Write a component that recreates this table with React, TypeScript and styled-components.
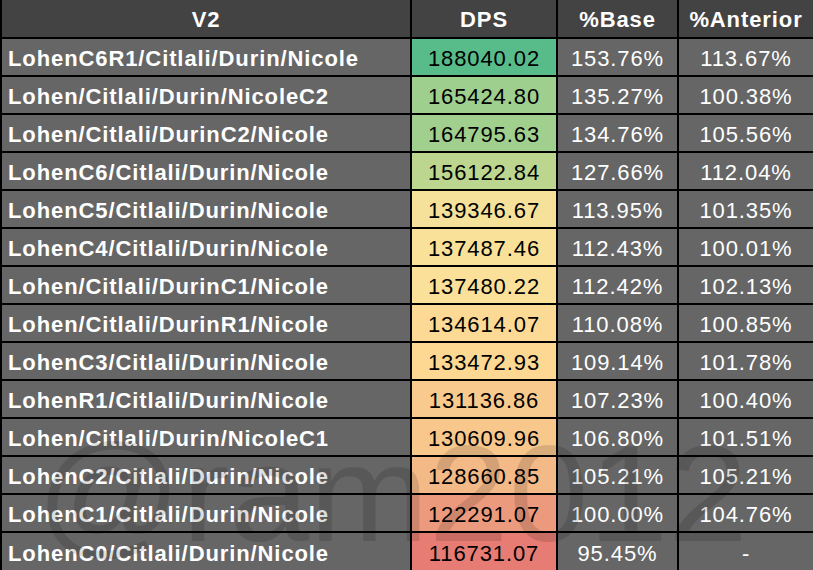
import styled, { createGlobalStyle } from "styled-components";

const GlobalStyle = createGlobalStyle`
  html, body {
    margin: 0;
    padding: 0;
    background: #666666;
  }
  body {
    font-family: "Liberation Sans", Arial, sans-serif;
  }
`;

type Row = {
  team: string;
  dps: string;
  base: string;
  prev: string;
  color: string;
};

const rows: Row[] = [
  { team: "LohenC6R1/Citlali/Durin/Nicole", dps: "188040.02", base: "153.76%", prev: "113.67%", color: "#57bb8a" },
  { team: "Lohen/Citlali/Durin/NicoleC2", dps: "165424.80", base: "135.27%", prev: "100.38%", color: "#9fcf8e" },
  { team: "Lohen/Citlali/DurinC2/Nicole", dps: "164795.63", base: "134.76%", prev: "105.56%", color: "#a0cf8e" },
  { team: "LohenC6/Citlali/Durin/Nicole", dps: "156122.84", base: "127.66%", prev: "112.04%", color: "#bcd68f" },
  { team: "LohenC5/Citlali/Durin/Nicole", dps: "139346.67", base: "113.95%", prev: "101.35%", color: "#f6e19a" },
  { team: "LohenC4/Citlali/Durin/Nicole", dps: "137487.46", base: "112.43%", prev: "100.01%", color: "#fae199" },
  { team: "Lohen/Citlali/DurinC1/Nicole", dps: "137480.22", base: "112.42%", prev: "102.13%", color: "#fbe099" },
  { team: "Lohen/Citlali/DurinR1/Nicole", dps: "134614.07", base: "110.08%", prev: "100.85%", color: "#fcda95" },
  { team: "LohenC3/Citlali/Durin/Nicole", dps: "133472.93", base: "109.14%", prev: "101.78%", color: "#fcd893" },
  { team: "LohenR1/Citlali/Durin/Nicole", dps: "131136.86", base: "107.23%", prev: "100.40%", color: "#f9ca8d" },
  { team: "Lohen/Citlali/Durin/NicoleC1", dps: "130609.96", base: "106.80%", prev: "101.51%", color: "#f8c78c" },
  { team: "LohenC2/Citlali/Durin/Nicole", dps: "128660.85", base: "105.21%", prev: "105.21%", color: "#f3b987" },
  { team: "LohenC1/Citlali/Durin/Nicole", dps: "122291.07", base: "100.00%", prev: "104.76%", color: "#ec9a7d" },
  { team: "LohenC0/Citlali/Durin/Nicole", dps: "116731.07", base: "95.45%", prev: "-", color: "#e67c73" },
];

export default function App() {
  return (
    <>
      <GlobalStyle />
      <Sheet>
        <Table>
          <HeadCell>V2</HeadCell>
          <HeadCell>DPS</HeadCell>
          <HeadCell>%Base</HeadCell>
          <HeadCell>%Anterior</HeadCell>
          {rows.map((r) => (
            <RowGroup key={r.team}>
              <TeamCell>{r.team}</TeamCell>
              <DpsCell $bg={r.color}>{r.dps}</DpsCell>
              <ValueCell>{r.base}</ValueCell>
              <ValueCell>{r.prev}</ValueCell>
            </RowGroup>
          ))}
        </Table>
        <Watermark aria-hidden="true">@ram2012</Watermark>
      </Sheet>
    </>
  );
}

function RowGroup({ children }: { children: React.ReactNode }) {
  return <>{children}</>;
}

const Sheet = styled.div`
  position: relative;
  width: 813px;
  height: 570px;
  overflow: hidden;
`;

const Table = styled.div`
  display: grid;
  grid-template-columns: 408px 144px 119px 134px;
  grid-template-rows: 37px repeat(13, 36px) 37px;
  gap: 2px;
  padding-left: 2px;
  height: 570px;
  background: #000000;
  font-size: 22px;
  letter-spacing: 0.9px;
`;

const Cell = styled.div`
  display: flex;
  align-items: center;
  justify-content: center;
  padding-top: 4px;
  background: #666666;
  color: #ffffff;
  white-space: nowrap;
  overflow: hidden;
`;

const HeadCell = styled(Cell)`
  background: #434343;
  font-weight: 700;
  padding-top: 3px;
`;

const TeamCell = styled(Cell)`
  justify-content: flex-start;
  padding-left: 6px;
  font-weight: 700;
`;

const DpsCell = styled(Cell)<{ $bg: string }>`
  background: ${(p) => p.$bg};
  color: #000000;
`;

const ValueCell = styled(Cell)``;

const Watermark = styled.div`
  position: absolute;
  left: 36px;
  top: 424px;
  font-family: "Liberation Sans", Arial, sans-serif;
  font-size: 138px;
  line-height: 1;
  color: rgba(0, 0, 0, 0.13);
  transform: scaleX(1.04);
  transform-origin: left top;
  white-space: nowrap;
  pointer-events: none;
`;
